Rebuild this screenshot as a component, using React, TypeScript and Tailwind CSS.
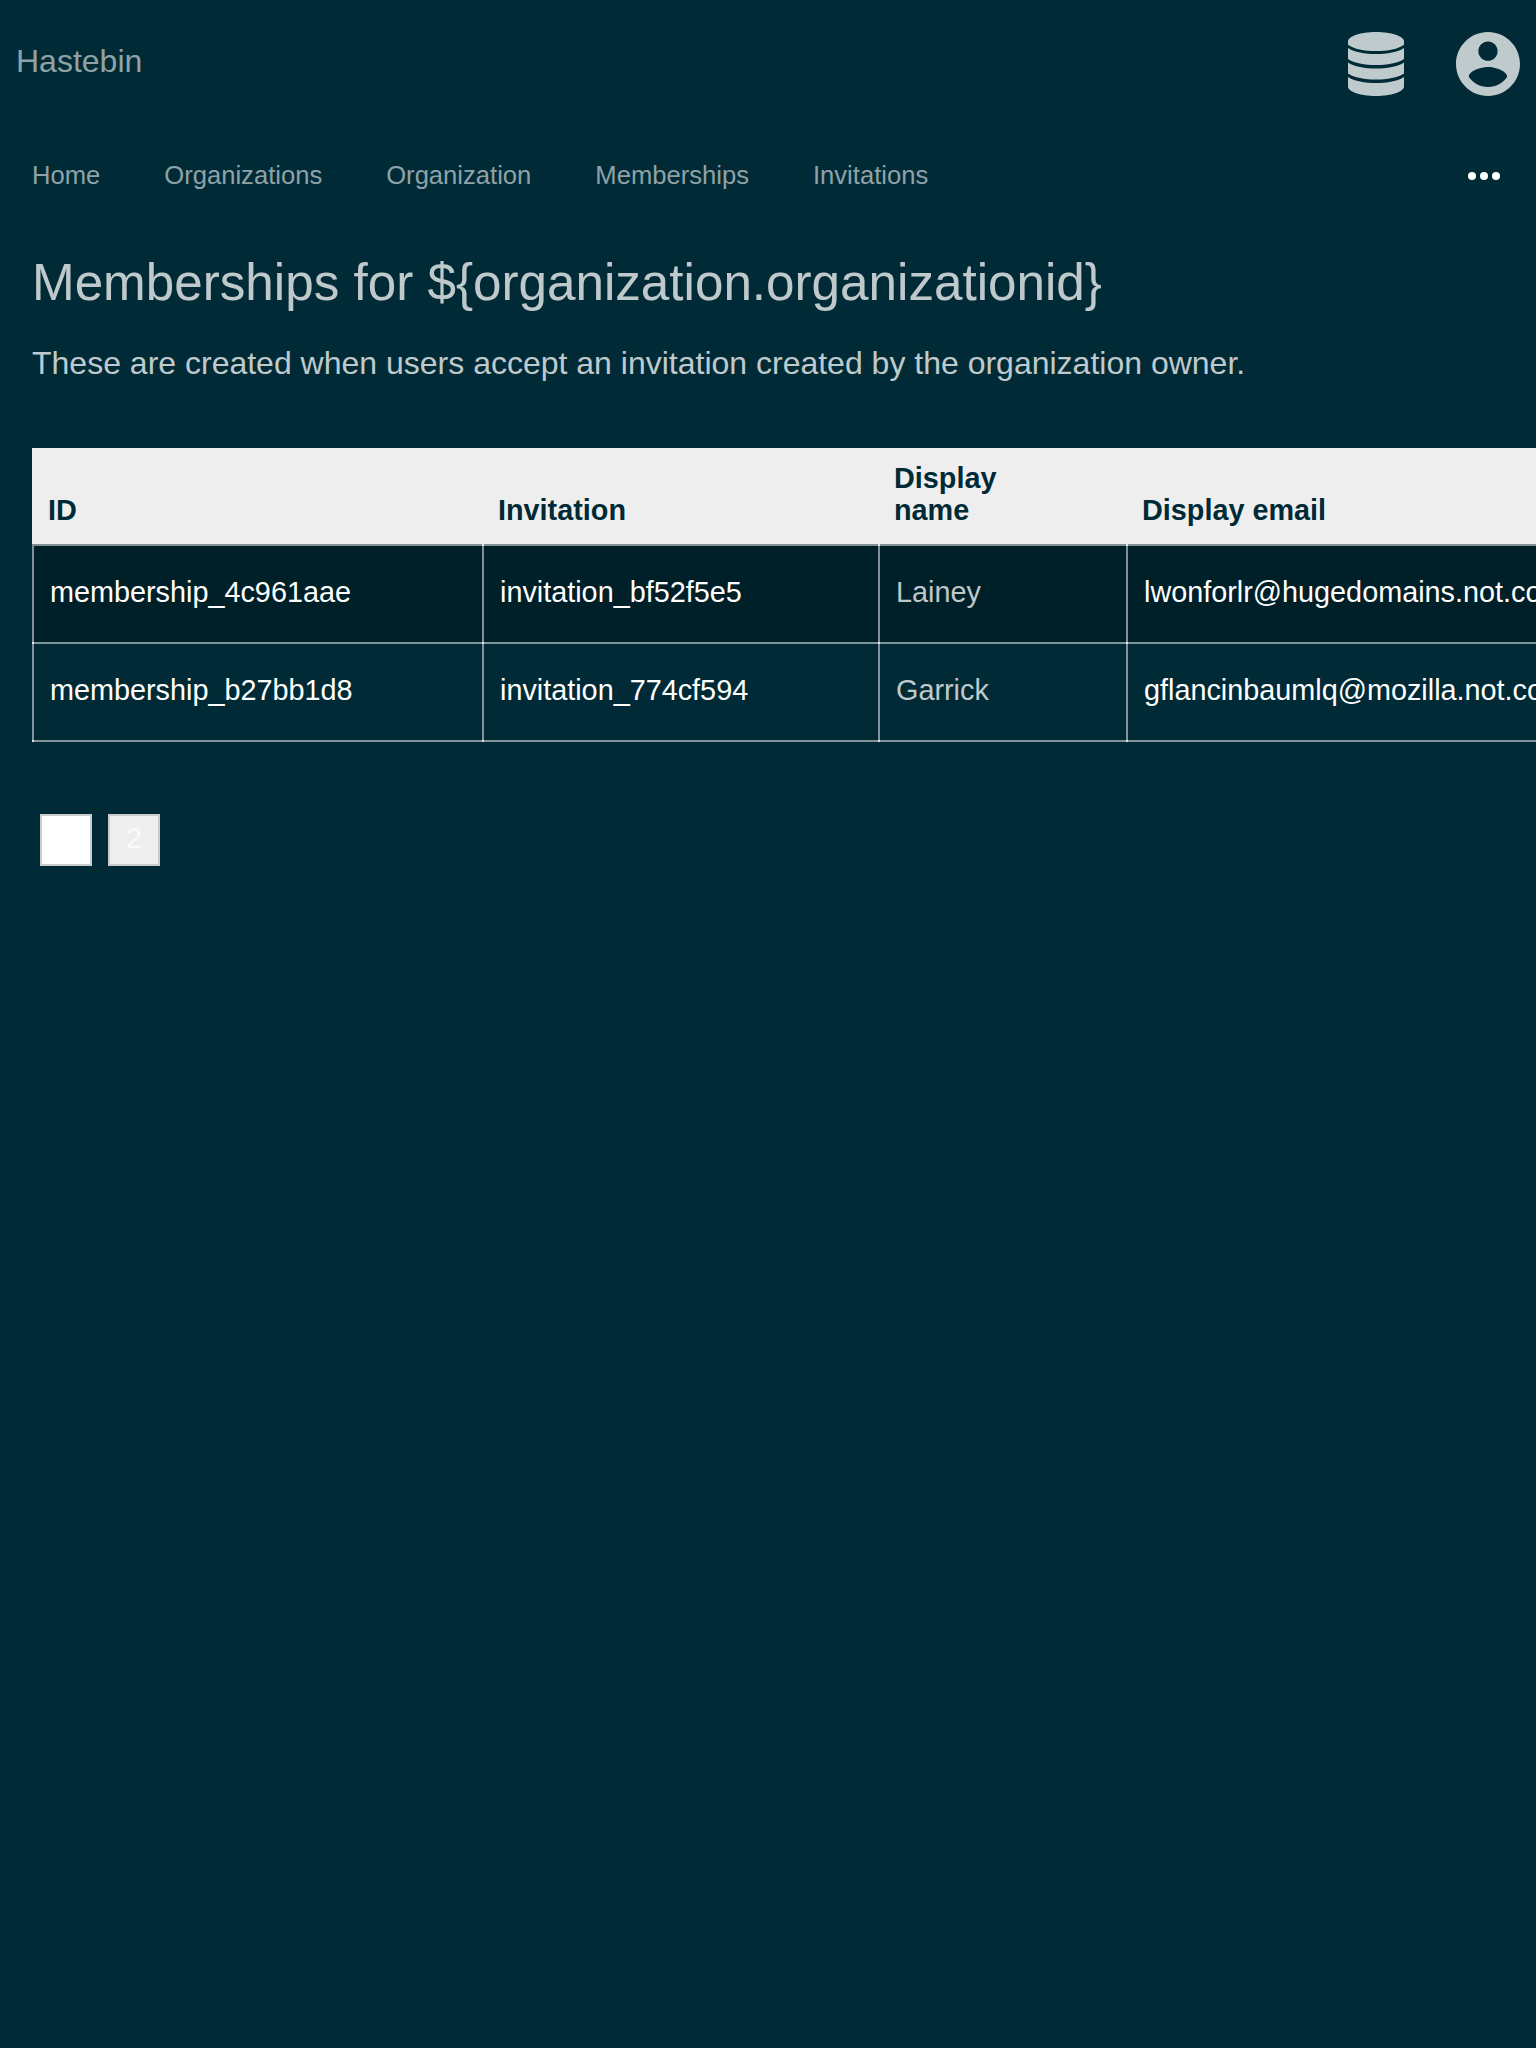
const NAV = ['Home', 'Organizations', 'Organization', 'Memberships', 'Invitations'];

const ROWS = [
  { id: 'membership_4c961aae', invitation: 'invitation_bf52f5e5', name: 'Lainey', email: 'lwonforlr@hugedomains.not.com' },
  { id: 'membership_b27bb1d8', invitation: 'invitation_774cf594', name: 'Garrick', email: 'gflancinbaumlq@mozilla.not.com' },
];

// Translucent cell borders, with a brighter 2px joint where the rules cross.
const CELL =
  'border-t-2 border-l-2 border-white/50 px-4 pt-[30px] align-top bg-no-repeat bg-origin-border bg-[length:2px_2px]';
const JOINT_TOP = 'bg-[linear-gradient(#ffffffbf,#ffffffbf)]';
const JOINT_BOTH =
  'border-b-2 bg-[linear-gradient(#ffffffbf,#ffffffbf),linear-gradient(#ffffffbf,#ffffffbf)] bg-[position:0_0,0_100%]';

function DatabaseIcon() {
  return (
    <svg viewBox="0 0 56 64" className="h-16 w-14" fill="currentColor" aria-hidden="true">
      <path d="M28 0C43.500 0 56 4.200 56 9.500V12.700C50 17 40 19 28 19S6 17 0 12.700V9.500C0 4.200 12.500 0 28 0Z" />
      <path d="M0 16C6 20 17 22 28 22S50 20 56 16V27C50 31 39 33 28 33S6 31 0 27Z" />
      <path d="M0 30.500C6 34.500 17 36.500 28 36.500S50 34.500 56 30.500V41.500C50 45.500 39 47.500 28 47.500S6 45.500 0 41.500Z" />
      <path d="M0 45C6 49 17 51 28 51S50 49 56 45V54.500C56 59.800 43.500 64 28 64S0 59.800 0 54.500Z" />
    </svg>
  );
}

function AccountIcon() {
  return (
    <svg viewBox="2 2 20 20" className="size-16" fill="currentColor" aria-hidden="true">
      <path d="M12 2C6.480 2 2 6.480 2 12s4.480 10 10 10 10-4.480 10-10S17.520 2 12 2zm0 3c1.660 0 3 1.340 3 3s-1.340 3-3 3-3-1.340-3-3 1.340-3 3-3zm0 14.200c-2.500 0-4.710-1.280-6-3.220.03-1.990 4-3.080 6-3.080 1.990 0 5.970 1.090 6 3.080-1.290 1.940-3.500 3.220-6 3.220z" />
    </svg>
  );
}

export default function App() {
  return (
    <div className="h-[2048px] w-full overflow-hidden bg-[#002b36] font-['Liberation_Sans',Arial,sans-serif] text-white/75">
      <header className="flex h-32 items-center justify-between px-4">
        <a className="-mt-1.5 text-[32px] leading-9 text-[#8fa2a7]">Hastebin</a>
        <div className="flex gap-[52px] text-[#bfcacd]">
          <DatabaseIcon />
          <AccountIcon />
        </div>
      </header>

      <nav className="flex h-24 items-center justify-between pr-9 pl-8">
        <ul className="-mt-0.5 flex gap-16 text-[25.600px] leading-8 text-[#8fa2a7]">
          {NAV.map((item) => (
            <li key={item}>{item}</li>
          ))}
        </ul>
        <div className="flex gap-1">
          <span className="size-2 rounded-full bg-white" />
          <span className="size-2 rounded-full bg-white" />
          <span className="size-2 rounded-full bg-white" />
        </div>
      </nav>

      <main className="pl-8">
        <h1 className="pt-[30px] text-[51.200px] leading-[57px]">Memberships for ${'{'}organization.organizationid{'}'}</h1>
        <p className="mt-[34px] text-[32px] leading-9">These are created when users accept an invitation created by the organization owner.</p>

        <table className="mt-[67px] w-[1600px] table-fixed border-separate border-spacing-0 text-left text-[28.800px] leading-8">
          <colgroup>
            <col className="w-[450px]" />
            <col className="w-[396px]" />
            <col className="w-[248px]" />
            <col />
          </colgroup>
          <thead className="bg-[#eeeeee] text-[#002b36]">
            <tr className="h-24 align-bottom">
              <th className="px-4 pb-[18px]">ID</th>
              <th className="px-4 pb-[18px]">Invitation</th>
              <th className="pr-16 pb-[18px] pl-4">Display name</th>
              <th className="px-4 pb-[18px]">Display email</th>
            </tr>
          </thead>
          <tbody>
            {ROWS.map((row, i) => {
              const last = i === ROWS.length - 1;
              const cell = `${CELL} ${last ? JOINT_BOTH : JOINT_TOP}`;
              const first = i === 0 ? CELL : cell;
              return (
                <tr key={row.id} className={last ? 'h-[100px]' : 'h-[98px] bg-[#002029]'}>
                  <td className={`${first} text-white`}>{row.id}</td>
                  <td className={`${cell} text-white`}>{row.invitation}</td>
                  <td className={cell}>{row.name}</td>
                  <td className={`${cell} text-white`}>{row.email}</td>
                </tr>
              );
            })}
          </tbody>
        </table>

        <div className="mt-[72px] ml-2 flex gap-4 text-[28.800px] leading-[44px]">
          <a className="size-[52px] border-2 border-[#cccccc] bg-white text-center text-white">1</a>
          <a className="size-[52px] border-2 border-[#cccccc] bg-[#eeeeee] text-center">2</a>
        </div>
      </main>
    </div>
  );
}
